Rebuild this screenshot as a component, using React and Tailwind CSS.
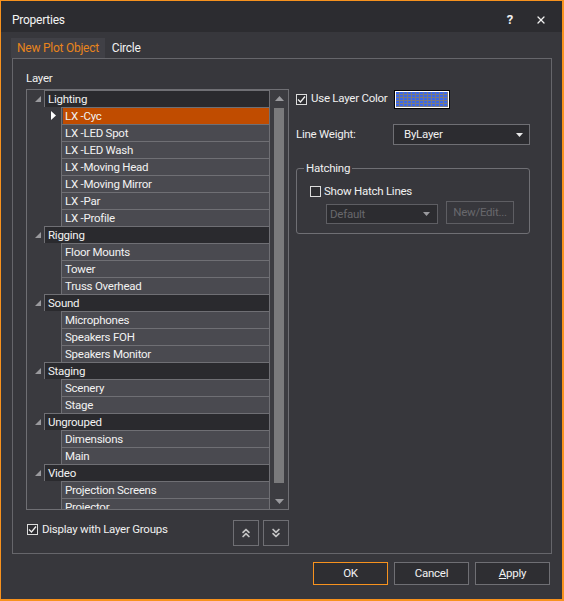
import { ChevronsUp, ChevronsDown, X } from 'lucide-react'

const groups = [
  { name: 'Lighting', items: ['LX -Cyc', 'LX -LED Spot', 'LX -LED Wash', 'LX -Moving Head', 'LX -Moving Mirror', 'LX -Par', 'LX -Profile'] },
  { name: 'Rigging', items: ['Floor Mounts', 'Tower', 'Truss Overhead'] },
  { name: 'Sound', items: ['Microphones', 'Speakers FOH', 'Speakers Monitor'] },
  { name: 'Staging', items: ['Scenery', 'Stage'] },
  { name: 'Ungrouped', items: ['Dimensions', 'Main'] },
  { name: 'Video', items: ['Projection Screens', 'Projector'] },
]

function Check({ checked }) {
  return (
    <span className="w-[11px] h-[11px] border border-[#dcdcdc] bg-[#2e2e32] flex items-center justify-center shrink-0">
      {checked && (
        <svg width="9" height="9" viewBox="0 0 9 9">
          <path d="M1 4.5 L3.5 7 L8 1.5" fill="none" stroke="#f0f0f0" strokeWidth="1.3" />
        </svg>
      )}
    </span>
  )
}

function Caret({ color = '#e8e8e8' }) {
  return (
    <svg width="7" height="4" viewBox="0 0 7 4">
      <polygon points="0,0 7,0 3.5,4" fill={color} />
    </svg>
  )
}

function GroupRow({ name }) {
  return (
    <div className="flex h-[17px]">
      <div className="w-[17px] flex items-center pl-[8px]">
        <svg width="6" height="6" viewBox="0 0 6 6">
          <polygon points="6,0 6,6 0,6" fill="#9a9a9e" />
        </svg>
      </div>
      <div className="flex-1 border-t border-l border-[#6f6f74] bg-[#2a2a2e] pl-[3px] leading-[16px] text-[#f2f2f2]">
        {name}
      </div>
    </div>
  )
}

function ItemRow({ name, selected }) {
  return (
    <div className="flex h-[17px]">
      <div className="w-[34px] flex items-center justify-end pr-[5px]">
        {selected && (
          <svg width="5" height="9" viewBox="0 0 5 9">
            <polygon points="0,0 5,4.5 0,9" fill="#ffffff" />
          </svg>
        )}
      </div>
      <div className="flex-1 flex border-t border-l border-[#6f6f74] bg-[#4a4a50]">
        <div className={`flex-1 ml-[1px] pl-[2px] leading-[16px] text-[#f2f2f2] whitespace-nowrap ${selected ? 'bg-[#c04c00]' : ''}`}>
          {name}
        </div>
      </div>
    </div>
  )
}

function Swatch() {
  return (
    <div className="border border-black shrink-0">
      <div className="border border-white bg-[#7a7a7a]">
        <svg width="52" height="15" className="block">
          <defs>
            <pattern id="grid" width="4" height="3" patternUnits="userSpaceOnUse">
              <rect x="0" y="0" width="4" height="3" fill="#7a7a80" />
              <rect x="0" y="0" width="3" height="2" fill="#3b68ea" />
            </pattern>
          </defs>
          <rect width="52" height="15" fill="url(#grid)" />
        </svg>
      </div>
    </div>
  )
}

export default function App() {
  return (
    <div className="w-[564px] h-[601px] bg-[#37373c] border border-[#f7921e] border-r-2 border-b-2 flex flex-col font-['Roboto',sans-serif] text-[11.5px] tracking-[-0.25px] text-[#f0f0f0] overflow-hidden">
      <div className="h-[31px] bg-[#2c2c30] flex items-center pt-[6px] pl-[11px] pr-[15px] shrink-0">
        <span className="flex-1 text-[12px] text-[#f4f4f4]">Properties</span>
        <span className="font-bold text-[13px] mr-[22px]">?</span>
        <X className="w-[12px] h-[12px]" strokeWidth={2.6} />
      </div>

      <div className="flex mt-[6px] ml-[10px] h-[20px] shrink-0">
        <div className="bg-[#404046] px-[6px] leading-[20px] text-[#e8841c] text-[12px]">New Plot Object</div>
        <div className="px-[7px] leading-[20px] text-[#f2f2f2] text-[12px]">Circle</div>
      </div>

      <div className="ml-[11px] w-[540px] h-[496px] border border-[#66666b] pl-[13px] pt-[11px] flex flex-col shrink-0">
        <div className="leading-[16px] mb-[3px]">Layer</div>
        <div className="flex gap-[7px]">
          <div className="w-[263px] flex flex-col">
            <div className="h-[421px] border border-[#6f6f74] flex overflow-hidden bg-[#3a3a3f]">
              <div className="w-[242px] overflow-hidden">
                {groups.map(g => (
                  <div key={g.name}>
                    <GroupRow name={g.name} />
                    {g.items.map(it => (
                      <ItemRow key={it} name={it} selected={it === 'LX -Cyc'} />
                    ))}
                  </div>
                ))}
              </div>
              <div className="w-[19px] border-l border-[#6f6f74] bg-[#3c3c41] flex flex-col items-center pt-[6px] pb-[5px]">
                <svg width="9" height="5" viewBox="0 0 9 5">
                  <polygon points="0,5 9,5 4.5,0" fill="#9a9a9e" />
                </svg>
                <div className="w-[10px] bg-[#7a7a7c] mt-[7px] h-[375px]" />
                <div className="flex-1" />
                <svg width="9" height="5" viewBox="0 0 9 5">
                  <polygon points="0,0 9,0 4.5,5" fill="#9a9a9e" />
                </svg>
              </div>
            </div>
            <div className="flex items-start mt-[10px]">
              <div className="flex items-center gap-[4px] mt-[2px] pl-[1px] flex-1">
                <Check checked />
                <span className="leading-[14px]">Display with Layer Groups</span>
              </div>
              <button className="w-[26px] h-[26px] border border-[#6f6f74] flex items-center justify-center mr-[4px]">
                <ChevronsUp className="w-[14px] h-[14px] text-[#c4c4c4]" strokeWidth={3} />
              </button>
              <button className="w-[26px] h-[26px] border border-[#6f6f74] flex items-center justify-center">
                <ChevronsDown className="w-[14px] h-[14px] text-[#c4c4c4]" strokeWidth={3} />
              </button>
            </div>
          </div>

          <div className="w-[234px] flex flex-col">
            <div className="flex items-center h-[20px]">
              <Check checked />
              <span className="ml-[4px] w-[83px] whitespace-nowrap">Use Layer Color</span>
              <Swatch />
            </div>
            <div className="flex items-center mt-[15px]">
              <span className="w-[97px]">Line Weight:</span>
              <div className="w-[137px] h-[21px] border border-[#6f6f74] bg-[#2c2c30] flex items-center pl-[10px] pr-[6px]">
                <span className="flex-1">ByLayer</span>
                <Caret />
              </div>
            </div>
            <fieldset className="mt-[16px] border border-[#6f6f74] rounded-[3px] pl-[13px] pr-[14px] pb-[10px] h-[73px]">
              <legend className="px-[2px] ml-[-6px] leading-[14px]">Hatching</legend>
              <div className="flex items-center gap-[3px] mt-[8px]">
                <Check />
                <span>Show Hatch Lines</span>
              </div>
              <div className="flex items-end mt-[1px] pl-[16px] gap-[8px]">
                <div className="w-[112px] h-[20px] border border-[#5e5e63] bg-[#2c2c30] flex items-center pl-[3px] pr-[7px] text-[#68686c]">
                  <span className="flex-1">Default</span>
                  <Caret color="#9a9a9e" />
                </div>
                <div className="w-[68px] h-[23px] border border-[#5e5e63] flex items-center justify-center text-[#68686c]">
                  New/Edit...
                </div>
              </div>
            </fieldset>
          </div>
        </div>
      </div>

      <div className="flex justify-end gap-[6px] mt-[8px] pr-[12px]">
        <button className="w-[75px] h-[23px] border border-[#f7921e] bg-[#2e2e32] text-[#f2f2f2]">OK</button>
        <button className="w-[75px] h-[23px] border border-[#6f6f74] bg-[#2e2e32] text-[#f2f2f2]">Cancel</button>
        <button className="w-[75px] h-[23px] border border-[#6f6f74] bg-[#2e2e32] text-[#f2f2f2]"><span className="underline">A</span>pply</button>
      </div>
    </div>
  )
}
